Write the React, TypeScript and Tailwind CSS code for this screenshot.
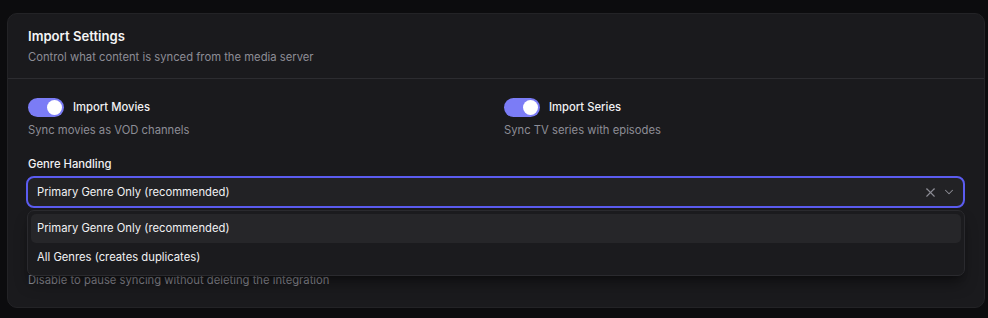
import { X, ChevronDown } from 'lucide-react';

function Toggle({ on }: { on: boolean }) {
  return (
    <span
      className={`flex h-[19px] w-[36px] shrink-0 items-center rounded-full p-[2px] ${
        on ? 'justify-end bg-[#7b7cf6]' : 'justify-start bg-[#3a3a3f]'
      }`}
    >
      <span className="h-[15px] w-[15px] rounded-full bg-white" />
    </span>
  );
}

function ToggleField({ label, hint }: { label: string; hint: string }) {
  return (
    <div className="flex flex-col gap-[5px]">
      <div className="flex h-5 items-center gap-[9px]">
        <Toggle on />
        <span className="text-[11.25px] font-medium text-[#f1f1f3]">{label}</span>
      </div>
      <p className="text-[11.25px] leading-4 text-[#8d8d96]">{hint}</p>
    </div>
  );
}

const options = ['Primary Genre Only (recommended)', 'All Genres (creates duplicates)'];

export default function App() {
  return (
    <div
      className="min-h-[318px] bg-[#0c0c0e] pl-[7px] pr-[3px] pt-[13px]"
      style={{ fontFamily: 'Inter, "Noto Sans", sans-serif' }}
    >
      <div className="rounded-[10px] border border-[#232326] bg-[#1a1a1d]">
        <div className="px-5 pb-[13px] pt-[12px]">
          <h2 className="text-[13.1px] font-semibold leading-5 text-[#f4f4f5]">Import Settings</h2>
          <p className="mt-[3px] text-[11.25px] leading-4 text-[#8d8d96]">
            Control what content is synced from the media server
          </p>
        </div>
        <div className="border-t border-[#2c2c30] px-5 pb-[19px] pt-[18px]">
          <div className="grid grid-cols-2 gap-4">
            <ToggleField label="Import Movies" hint="Sync movies as VOD channels" />
            <ToggleField label="Import Series" hint="Sync TV series with episodes" />
          </div>

          <div className="relative mt-[16px]">
            <label className="block text-[11.25px] font-medium leading-5 text-[#f1f1f3]">Genre Handling</label>
            <div className="-ml-[2px] -mr-[1px] mt-[2px] flex h-[32px] items-center justify-between rounded-[8px] border-2 border-[#5b5cf0] bg-[#222225] pl-[9px] pr-[7px]">
              <span className="text-[11.25px] text-[#f1f1f3]">Primary Genre Only (recommended)</span>
              <div className="flex items-center gap-[4px] text-[#8d8d96]">
                <X size={15} strokeWidth={1.75} />
                <ChevronDown size={14} strokeWidth={1.75} />
              </div>
            </div>

            <div className="absolute -left-[1px] -right-[1px] top-[56px] z-10 rounded-[7px] border border-[#2a2a2e] bg-[#1b1b1e] p-[3px] shadow-lg shadow-black/40">
              {options.map((o, i) => (
                <div
                  key={o}
                  className={`flex h-[29px] items-center rounded-[5px] px-[6px] text-[11.25px] text-[#f1f1f3] ${
                    i === 0 ? 'bg-[#262629]' : ''
                  }`}
                >
                  {o}
                </div>
              ))}
            </div>

            <div className="mt-[39px] flex flex-col gap-[5px]">
              <div className="flex h-5 items-center">
                <Toggle on />
              </div>
              <p className="text-[11.25px] leading-4 text-[#8d8d96]">
                Disable to pause syncing without deleting the integration
              </p>
            </div>
          </div>
        </div>
      </div>
    </div>
  );
}
